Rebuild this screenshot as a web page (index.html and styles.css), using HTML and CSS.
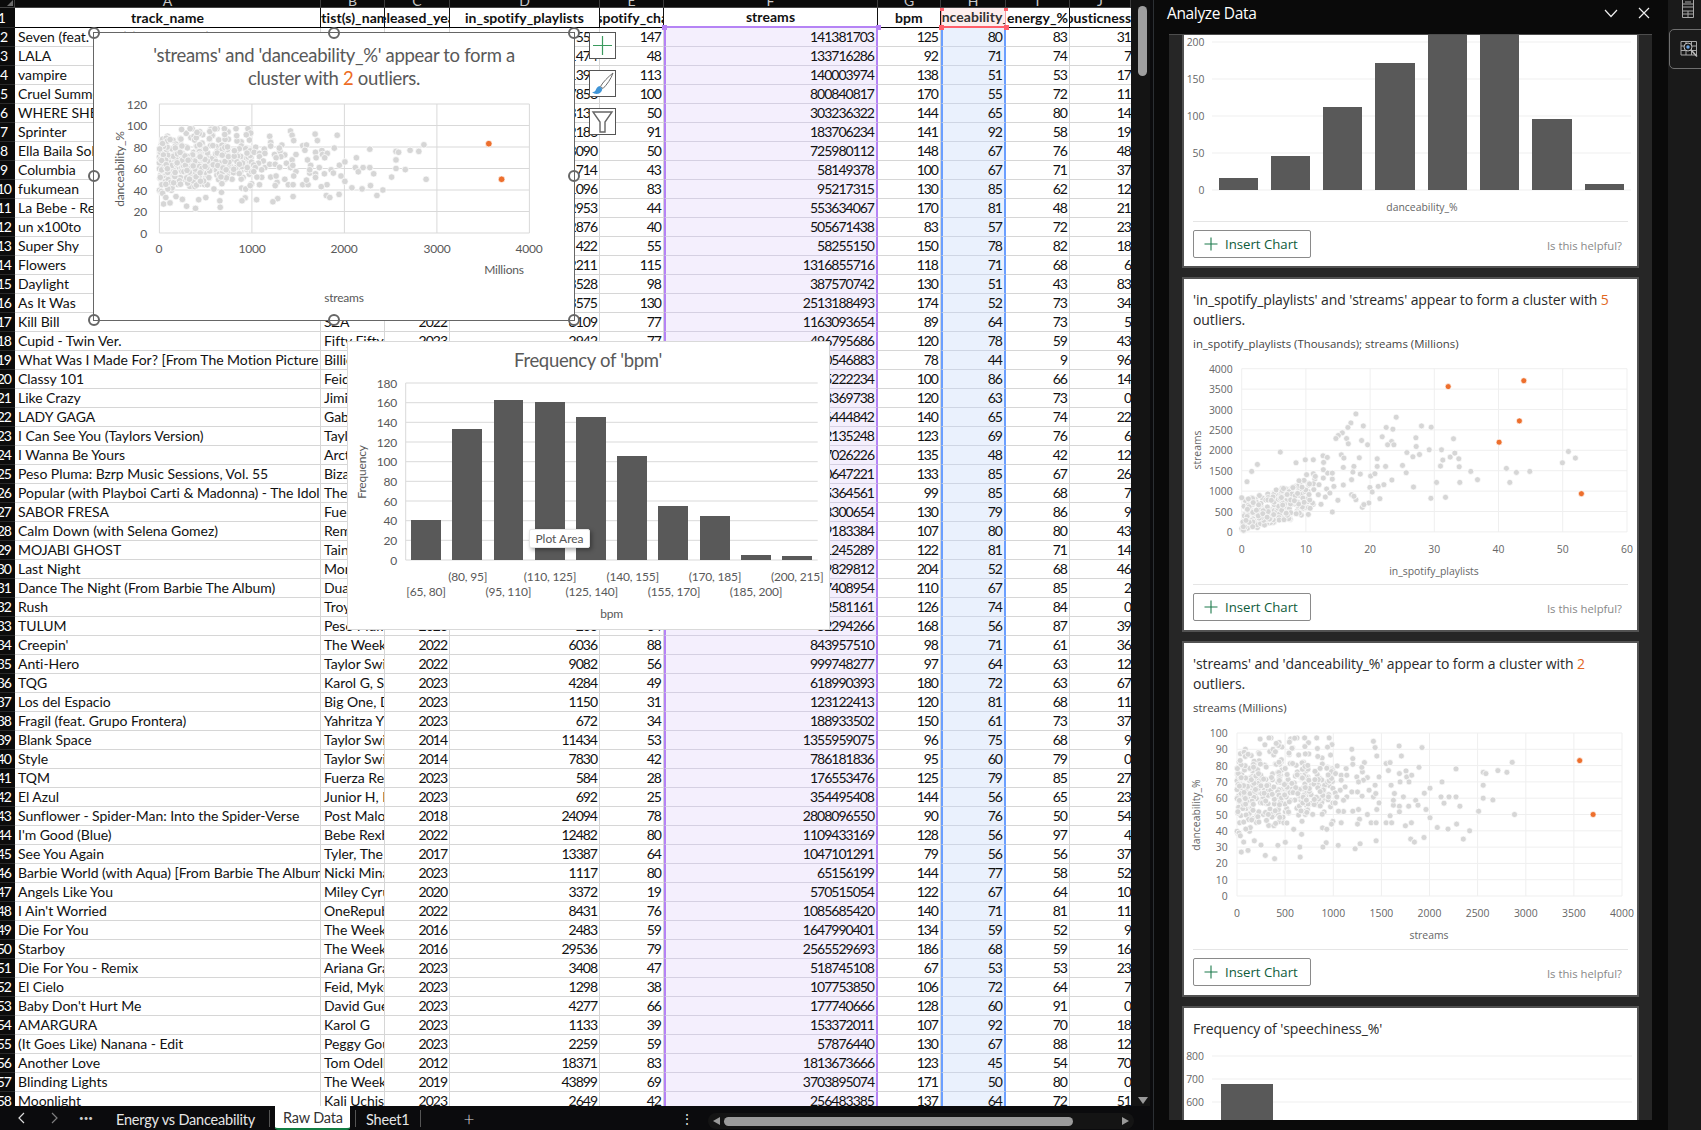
FILE: index.html
```html
<!DOCTYPE html>
<html lang="en">
<head>
<meta charset="utf-8">
<title>Analyze Data</title>
<link rel="stylesheet" href="styles.css">
</head>
<body>
<main class="sheet">
  <div class="grid-area">
    <div class="cells">
      <table class="data">
        <colgroup><col class="c0"><col class="c1"><col class="c2"><col class="c3"><col class="c4"><col class="c5"><col class="c6"><col class="c7"><col class="c8"><col class="c9"><col class="c10"></colgroup>
        <thead>
          <tr class="letters"><th class="corner"></th><th><div class="hc"><span>A</span></div></th><th><div class="hc"><span>B</span></div></th><th><div class="hc"><span>C</span></div></th><th><div class="hc"><span>D</span></div></th><th><div class="hc"><span>E</span></div></th><th><div class="hc"><span>F</span></div></th><th><div class="hc"><span>G</span></div></th><th><div class="hc"><span>H</span></div></th><th><div class="hc"><span>I</span></div></th><th><div class="hc"><span>J</span></div></th></tr>
          <tr class="names"><th class="rn">1</th><th><div class="hc"><span>track_name</span></div></th><th><div class="hc"><span>artist(s)_name</span></div></th><th><div class="hc"><span>released_year</span></div></th><th><div class="hc"><span>in_spotify_playlists</span></div></th><th><div class="hc"><span>in_spotify_charts</span></div></th><th class="sel-f"><div class="hc"><span>streams</span></div></th><th><div class="hc"><span>bpm</span></div></th><th class="sel-h"><div class="hc"><span>danceability_%</span></div></th><th><div class="hc"><span>energy_%</span></div></th><th><div class="hc"><span>acousticness_%</span></div></th></tr>
        </thead>
        <tbody>
<tr><th>2</th><td>Seven (feat. Latto) (Explicit Ver.)</td><td>Latto, Jung Kook</td><td>2023</td><td>553</td><td>147</td><td>141381703</td><td>125</td><td>80</td><td>83</td><td>31</td></tr>
<tr><th>3</th><td>LALA</td><td>Myke Towers</td><td>2023</td><td>1474</td><td>48</td><td>133716286</td><td>92</td><td>71</td><td>74</td><td>7</td></tr>
<tr><th>4</th><td>vampire</td><td>Olivia Rodrigo</td><td>2023</td><td>1397</td><td>113</td><td>140003974</td><td>138</td><td>51</td><td>53</td><td>17</td></tr>
<tr><th>5</th><td>Cruel Summer</td><td>Taylor Swift</td><td>2019</td><td>7858</td><td>100</td><td>800840817</td><td>170</td><td>55</td><td>72</td><td>11</td></tr>
<tr><th>6</th><td>WHERE SHE GOES</td><td>Bad Bunny</td><td>2023</td><td>3133</td><td>50</td><td>303236322</td><td>144</td><td>65</td><td>80</td><td>14</td></tr>
<tr><th>7</th><td>Sprinter</td><td>Dave, Central Cee</td><td>2023</td><td>2186</td><td>91</td><td>183706234</td><td>141</td><td>92</td><td>58</td><td>19</td></tr>
<tr><th>8</th><td>Ella Baila Sola</td><td>Eslabon Armado</td><td>2023</td><td>3090</td><td>50</td><td>725980112</td><td>148</td><td>67</td><td>76</td><td>48</td></tr>
<tr><th>9</th><td>Columbia</td><td>Quevedo</td><td>2023</td><td>714</td><td>43</td><td>58149378</td><td>100</td><td>67</td><td>71</td><td>37</td></tr>
<tr><th>10</th><td>fukumean</td><td>Gunna</td><td>2023</td><td>1096</td><td>83</td><td>95217315</td><td>130</td><td>85</td><td>62</td><td>12</td></tr>
<tr><th>11</th><td>La Bebe - Remix</td><td>Peso Pluma</td><td>2023</td><td>2953</td><td>44</td><td>553634067</td><td>170</td><td>81</td><td>48</td><td>21</td></tr>
<tr><th>12</th><td>un x100to</td><td>Bad Bunny</td><td>2023</td><td>2876</td><td>40</td><td>505671438</td><td>83</td><td>57</td><td>72</td><td>23</td></tr>
<tr><th>13</th><td>Super Shy</td><td>NewJeans</td><td>2023</td><td>422</td><td>55</td><td>58255150</td><td>150</td><td>78</td><td>82</td><td>18</td></tr>
<tr><th>14</th><td>Flowers</td><td>Miley Cyrus</td><td>2023</td><td>12211</td><td>115</td><td>1316855716</td><td>118</td><td>71</td><td>68</td><td>6</td></tr>
<tr><th>15</th><td>Daylight</td><td>David Kushner</td><td>2023</td><td>3528</td><td>98</td><td>387570742</td><td>130</td><td>51</td><td>43</td><td>83</td></tr>
<tr><th>16</th><td>As It Was</td><td>Harry Styles</td><td>2022</td><td>23575</td><td>130</td><td>2513188493</td><td>174</td><td>52</td><td>73</td><td>34</td></tr>
<tr><th>17</th><td>Kill Bill</td><td>SZA</td><td>2022</td><td>8109</td><td>77</td><td>1163093654</td><td>89</td><td>64</td><td>73</td><td>5</td></tr>
<tr><th>18</th><td>Cupid - Twin Ver.</td><td>Fifty Fifty</td><td>2023</td><td>2942</td><td>77</td><td>496795686</td><td>120</td><td>78</td><td>59</td><td>43</td></tr>
<tr><th>19</th><td>What Was I Made For? [From The Motion Picture "Barbie"]</td><td>Billie Eilish</td><td>2023</td><td>711</td><td>98</td><td>30546883</td><td>78</td><td>44</td><td>9</td><td>96</td></tr>
<tr><th>20</th><td>Classy 101</td><td>Feid, Young Miko</td><td>2023</td><td>2610</td><td>40</td><td>335222234</td><td>100</td><td>86</td><td>66</td><td>14</td></tr>
<tr><th>21</th><td>Like Crazy</td><td>Jimin</td><td>2023</td><td>596</td><td>68</td><td>363369738</td><td>120</td><td>63</td><td>73</td><td>0</td></tr>
<tr><th>22</th><td>LADY GAGA</td><td>Gabito Ballesteros</td><td>2023</td><td>332</td><td>26</td><td>86444842</td><td>140</td><td>65</td><td>74</td><td>22</td></tr>
<tr><th>23</th><td>I Can See You (Taylors Version)</td><td>Taylor Swift</td><td>2023</td><td>516</td><td>38</td><td>52135248</td><td>123</td><td>69</td><td>76</td><td>6</td></tr>
<tr><th>24</th><td>I Wanna Be Yours</td><td>Arctic Monkeys</td><td>2013</td><td>12859</td><td>110</td><td>1297026226</td><td>135</td><td>48</td><td>42</td><td>12</td></tr>
<tr><th>25</th><td>Peso Pluma: Bzrp Music Sessions, Vol. 55</td><td>Bizarrap, Peso Pluma</td><td>2023</td><td>1313</td><td>40</td><td>200647221</td><td>133</td><td>85</td><td>67</td><td>26</td></tr>
<tr><th>26</th><td>Popular (with Playboi Carti &amp; Madonna) - The Idol Vol. 1</td><td>The Weeknd</td><td>2023</td><td>1945</td><td>87</td><td>115364561</td><td>99</td><td>85</td><td>68</td><td>7</td></tr>
<tr><th>27</th><td>SABOR FRESA</td><td>Fuerza Regida</td><td>2023</td><td>250</td><td>26</td><td>78300654</td><td>130</td><td>79</td><td>86</td><td>9</td></tr>
<tr><th>28</th><td>Calm Down (with Selena Gomez)</td><td>Rema, Selena Gomez</td><td>2022</td><td>7112</td><td>77</td><td>899183384</td><td>107</td><td>80</td><td>80</td><td>43</td></tr>
<tr><th>29</th><td>MOJABI GHOST</td><td>Tainy, Bad Bunny</td><td>2023</td><td>807</td><td>48</td><td>61245289</td><td>122</td><td>81</td><td>71</td><td>14</td></tr>
<tr><th>30</th><td>Last Night</td><td>Morgan Wallen</td><td>2023</td><td>2420</td><td>19</td><td>429829812</td><td>204</td><td>52</td><td>68</td><td>46</td></tr>
<tr><th>31</th><td>Dance The Night (From Barbie The Album)</td><td>Dua Lipa</td><td>2023</td><td>2988</td><td>101</td><td>127408954</td><td>110</td><td>67</td><td>85</td><td>2</td></tr>
<tr><th>32</th><td>Rush</td><td>Troye Sivan</td><td>2023</td><td>864</td><td>78</td><td>22581161</td><td>126</td><td>74</td><td>84</td><td>0</td></tr>
<tr><th>33</th><td>TULUM</td><td>Peso Pluma</td><td>2023</td><td>266</td><td>34</td><td>52294266</td><td>168</td><td>56</td><td>87</td><td>39</td></tr>
<tr><th>34</th><td>Creepin'</td><td>The Weeknd</td><td>2022</td><td>6036</td><td>88</td><td>843957510</td><td>98</td><td>71</td><td>61</td><td>36</td></tr>
<tr><th>35</th><td>Anti-Hero</td><td>Taylor Swift</td><td>2022</td><td>9082</td><td>56</td><td>999748277</td><td>97</td><td>64</td><td>63</td><td>12</td></tr>
<tr><th>36</th><td>TQG</td><td>Karol G, Shakira</td><td>2023</td><td>4284</td><td>49</td><td>618990393</td><td>180</td><td>72</td><td>63</td><td>67</td></tr>
<tr><th>37</th><td>Los del Espacio</td><td>Big One, Duki</td><td>2023</td><td>1150</td><td>31</td><td>123122413</td><td>120</td><td>81</td><td>68</td><td>11</td></tr>
<tr><th>38</th><td>Fragil (feat. Grupo Frontera)</td><td>Yahritza Y Su Esencia</td><td>2023</td><td>672</td><td>34</td><td>188933502</td><td>150</td><td>61</td><td>73</td><td>37</td></tr>
<tr><th>39</th><td>Blank Space</td><td>Taylor Swift</td><td>2014</td><td>11434</td><td>53</td><td>1355959075</td><td>96</td><td>75</td><td>68</td><td>9</td></tr>
<tr><th>40</th><td>Style</td><td>Taylor Swift</td><td>2014</td><td>7830</td><td>42</td><td>786181836</td><td>95</td><td>60</td><td>79</td><td>0</td></tr>
<tr><th>41</th><td>TQM</td><td>Fuerza Regida</td><td>2023</td><td>584</td><td>28</td><td>176553476</td><td>125</td><td>79</td><td>85</td><td>27</td></tr>
<tr><th>42</th><td>El Azul</td><td>Junior H, Peso Pluma</td><td>2023</td><td>692</td><td>25</td><td>354495408</td><td>144</td><td>56</td><td>65</td><td>23</td></tr>
<tr><th>43</th><td>Sunflower - Spider-Man: Into the Spider-Verse</td><td>Post Malone, Swae Lee</td><td>2018</td><td>24094</td><td>78</td><td>2808096550</td><td>90</td><td>76</td><td>50</td><td>54</td></tr>
<tr><th>44</th><td>I'm Good (Blue)</td><td>Bebe Rexha, David Guetta</td><td>2022</td><td>12482</td><td>80</td><td>1109433169</td><td>128</td><td>56</td><td>97</td><td>4</td></tr>
<tr><th>45</th><td>See You Again</td><td>Tyler, The Creator</td><td>2017</td><td>13387</td><td>64</td><td>1047101291</td><td>79</td><td>56</td><td>56</td><td>37</td></tr>
<tr><th>46</th><td>Barbie World (with Aqua) [From Barbie The Album]</td><td>Nicki Minaj, Aqua</td><td>2023</td><td>1117</td><td>80</td><td>65156199</td><td>144</td><td>77</td><td>58</td><td>52</td></tr>
<tr><th>47</th><td>Angels Like You</td><td>Miley Cyrus</td><td>2020</td><td>3372</td><td>19</td><td>570515054</td><td>122</td><td>67</td><td>64</td><td>10</td></tr>
<tr><th>48</th><td>I Ain't Worried</td><td>OneRepublic</td><td>2022</td><td>8431</td><td>76</td><td>1085685420</td><td>140</td><td>71</td><td>81</td><td>11</td></tr>
<tr><th>49</th><td>Die For You</td><td>The Weeknd</td><td>2016</td><td>2483</td><td>59</td><td>1647990401</td><td>134</td><td>59</td><td>52</td><td>9</td></tr>
<tr><th>50</th><td>Starboy</td><td>The Weeknd</td><td>2016</td><td>29536</td><td>79</td><td>2565529693</td><td>186</td><td>68</td><td>59</td><td>16</td></tr>
<tr><th>51</th><td>Die For You - Remix</td><td>Ariana Grande</td><td>2023</td><td>3408</td><td>47</td><td>518745108</td><td>67</td><td>53</td><td>53</td><td>23</td></tr>
<tr><th>52</th><td>El Cielo</td><td>Feid, Myke Towers</td><td>2023</td><td>1298</td><td>38</td><td>107753850</td><td>106</td><td>72</td><td>64</td><td>7</td></tr>
<tr><th>53</th><td>Baby Don't Hurt Me</td><td>David Guetta</td><td>2023</td><td>4277</td><td>66</td><td>177740666</td><td>128</td><td>60</td><td>91</td><td>0</td></tr>
<tr><th>54</th><td>AMARGURA</td><td>Karol G</td><td>2023</td><td>1133</td><td>39</td><td>153372011</td><td>107</td><td>92</td><td>70</td><td>18</td></tr>
<tr><th>55</th><td>(It Goes Like) Nanana - Edit</td><td>Peggy Gou</td><td>2023</td><td>2259</td><td>59</td><td>57876440</td><td>130</td><td>67</td><td>88</td><td>12</td></tr>
<tr><th>56</th><td>Another Love</td><td>Tom Odell</td><td>2012</td><td>18371</td><td>83</td><td>1813673666</td><td>123</td><td>45</td><td>54</td><td>70</td></tr>
<tr><th>57</th><td>Blinding Lights</td><td>The Weeknd</td><td>2019</td><td>43899</td><td>69</td><td>3703895074</td><td>171</td><td>50</td><td>80</td><td>0</td></tr>
<tr><th>58</th><td>Moonlight</td><td>Kali Uchis</td><td>2023</td><td>2649</td><td>42</td><td>256483385</td><td>137</td><td>64</td><td>72</td><td>51</td></tr>
        </tbody>
      </table>

      <span class="grip grip-f1"></span><span class="grip grip-f2"></span>
      <span class="grip grip-h1"></span><span class="grip grip-h2"></span>
      <span class="grip grip-h3"></span><span class="grip grip-h4"></span>

      <figure class="chart chart-scatter">
        <svg width="480" height="287" viewBox="0 0 480 287">
          <text class="ctitle" x="240" y="21.5">'streams' and 'danceability_%' appear to form a</text>
          <text class="ctitle" x="240" y="44.5">cluster with <tspan class="orange">2</tspan> outliers.</text>
          <path class="xlgrid" d="M65.4 71H435.4M65.4 92.5H435.4M65.4 114H435.4M65.4 135.5H435.4M65.4 157H435.4M65.4 178.5H435.4M65.4 200H435.4M65.4 71V200M157.9 71V200M250.4 71V200M342.9 71V200M435.4 71V200"/>
          <g class="xt end"><text x="53" y="71">120</text><text x="53" y="92.5">100</text><text x="53" y="114">80</text><text x="53" y="135.5">60</text><text x="53" y="157">40</text><text x="53" y="178.5">20</text><text x="53" y="200">0</text></g>
          <g class="xt mid"><text x="65" y="215">0</text><text x="158" y="215">1000</text><text x="250" y="215">2000</text><text x="343" y="215">3000</text><text x="435" y="215">4000</text><text x="410" y="236">Millions</text><text x="250" y="264">streams</text></g>
          <text class="xt mid" transform="translate(25 136) rotate(-90)">danceability_%</text>
          <g id="dots-a" data-x="65.4" data-w="370" data-y="200" data-h="107.5" data-r="3.3"></g>
          <g class="handles"><circle cx="0" cy="0" r="5"/><circle cx="240" cy="0" r="5"/><circle cx="480" cy="0" r="5"/><circle cx="0" cy="143" r="5"/><circle cx="480" cy="143" r="5"/><circle cx="0" cy="287" r="5"/><circle cx="240" cy="287" r="5"/><circle cx="480" cy="287" r="5"/></g>
        </svg>
      </figure>

      <div class="chart-tools">
        <button class="tool" aria-label="Chart elements"><svg width="25" height="25" viewBox="0 0 25 25"><path class="i-plus" d="M12.5 3V22M3 12.5H22"/></svg></button>
        <button class="tool" aria-label="Chart styles"><svg width="25" height="25" viewBox="0 0 25 25"><path class="i-handle" d="M23 2C18 6 13 11 10.5 15.5L13 17.5C17 13.5 21 8 23 2Z"/><path class="i-brush" d="M9.5 15C7 15.5 6.5 17.5 5.5 19.5C5 20.5 3.5 21 2 21C4.5 23.5 9 23.5 11 21C12 19.5 12.5 18.5 12 17.5Z"/></svg></button>
        <button class="tool" aria-label="Chart filters"><svg width="25" height="25" viewBox="0 0 25 25"><path class="i-funnel" d="M3 3H22L15 13V23H10V13Z"/></svg></button>
      </div>

      <figure class="chart chart-bpm">
        <svg width="481" height="287" viewBox="0 0 481 287">
          <text class="ctitle" x="240" y="18">Frequency of 'bpm'</text>
          <path class="xlgrid" d="M57.7 41H469.7M57.7 60.7H469.7M57.7 80.3H469.7M57.7 100H469.7M57.7 119.7H469.7M57.7 139.3H469.7M57.7 159H469.7M57.7 178.7H469.7M57.7 198.3H469.7M57.7 218H469.7M57.7 41V218"/>
          <g class="xt end"><text x="49" y="41">180</text><text x="49" y="60.7">160</text><text x="49" y="80.3">140</text><text x="49" y="100">120</text><text x="49" y="119.7">100</text><text x="49" y="139.3">80</text><text x="49" y="159">60</text><text x="49" y="178.7">40</text><text x="49" y="198.3">20</text><text x="49" y="218">0</text></g>
          <g class="bars"><rect x="63" y="178" width="30" height="40"/><rect x="104" y="87" width="30" height="131"/><rect x="146" y="58" width="29" height="160"/><rect x="187" y="60" width="30" height="158"/><rect x="228" y="75" width="30" height="143"/><rect x="269" y="114" width="30" height="104"/><rect x="310" y="164" width="30" height="54"/><rect x="352" y="174" width="30" height="44"/><rect x="393" y="213" width="30" height="5"/><rect x="434" y="214" width="30" height="4"/></g>
          <g class="xt mid"><text x="119.7" y="234">(80, 95]</text><text x="202" y="234">(110, 125]</text><text x="284.7" y="234">(140, 155]</text><text x="367" y="234">(170, 185]</text><text x="449.3" y="234">(200, 215]</text><text x="78" y="249">[65, 80]</text><text x="160.3" y="249">(95, 110]</text><text x="243.7" y="249">(125, 140]</text><text x="326" y="249">(155, 170]</text><text x="408" y="249">(185, 200]</text><text x="263.7" y="271">bpm</text></g>
          <text class="xt mid" transform="translate(13 130) rotate(-90)">Frequency</text>
        </svg>
        <div class="plot-tip">Plot Area</div>
      </figure>
    </div>
    <div class="vscroll"><span class="vthumb"></span><span class="varrow"></span></div>
  </div>

  <nav class="tabbar">
    <span class="nav-arrow">
      <svg width="10" height="12" viewBox="0 0 10 12"><path class="i-line" d="M7 1L2 6L7 11"/></svg>
    </span>
    <span class="nav-arrow dim">
      <svg width="10" height="12" viewBox="0 0 10 12"><path class="i-line" d="M3 1L8 6L3 11"/></svg>
    </span>
    <span class="more">•••</span>
    <span class="tab first">Energy vs Danceability</span>
    <span class="sep"></span>
    <span class="tab active">Raw Data</span>
    <span class="sep sep-after"></span>
    <span class="tab third">Sheet1</span>
    <span class="sep"></span>
    <span class="add">+</span>
    <span class="kebab">⋮</span>
    <div class="hscroll"><span class="harrow left"></span><span class="hthumb"></span><span class="harrow right"></span></div>
  </nav>
</main>

<aside class="panel">
  <header class="panel-head">
    <h1>Analyze Data</h1>
    <svg class="head-ico" width="14" height="9" viewBox="0 0 14 9"><path class="i-white" d="M1 1L7 7.5L13 1"/></svg>
    <svg class="head-ico" width="12" height="12" viewBox="0 0 12 12"><path class="i-white" d="M1 1L11 11M11 1L1 11"/></svg>
  </header>
  <div class="scroller">
    <article class="card card-clipped">
      <svg class="plot" width="453" height="186" viewBox="0 0 453 186">
        <path class="lgrid" d="M28 7H447M28 44H447M28 81H447M28 118H447M28 155H447"/>
        <g class="at end"><text x="20.5" y="7">200</text><text x="20.5" y="44">150</text><text x="20.5" y="81">100</text><text x="20.5" y="118">50</text><text x="20.5" y="155">0</text></g>
        <g class="bars"><rect x="35" y="143" width="39" height="12"/><rect x="87" y="121" width="39" height="34"/><rect x="139" y="72" width="39" height="83"/><rect x="191" y="28" width="40" height="127"/><rect x="244" y="0" width="39" height="155"/><rect x="296" y="0" width="39" height="155"/><rect x="348" y="84" width="40" height="71"/><rect x="401" y="149" width="39" height="6"/></g>
        <text class="at mid" x="238" y="172">danceability_%</text>
      </svg>
      <footer class="card-foot">
        <button class="insert"><svg width="14" height="14" viewBox="0 0 14 14"><path class="i-green" d="M7 0.5V13.5M0.5 7H13.5"/></svg>Insert Chart</button>
        <span class="helpful">Is this helpful?</span>
      </footer>
    </article>

    <article class="card">
      <h2>'in_spotify_playlists' and 'streams' appear to form a cluster with <span class="orange">5</span> outliers.</h2>
      <p class="sub">in_spotify_playlists (Thousands); streams (Millions)</p>
      <svg class="plot" width="453" height="226" viewBox="0 0 453 226">
        <path class="lgrid" d="M57.7 14.7H443M57.7 35.1H443M57.7 55.5H443M57.7 75.9H443M57.7 96.3H443M57.7 116.7H443M57.7 137.1H443M57.7 157.5H443M57.7 177.9H443M57.7 14.7V178M121.9 14.7V178M186.1 14.7V178M250.3 14.7V178M314.5 14.7V178M378.7 14.7V178M443 14.7V178"/>
        <g class="at end"><text x="48.7" y="14.7">4000</text><text x="48.7" y="35.1">3500</text><text x="48.7" y="55.5">3000</text><text x="48.7" y="75.9">2500</text><text x="48.7" y="96.3">2000</text><text x="48.7" y="116.7">1500</text><text x="48.7" y="137.1">1000</text><text x="48.7" y="157.5">500</text><text x="48.7" y="177.9">0</text></g>
        <g class="at mid"><text x="57.7" y="195">0</text><text x="121.9" y="195">10</text><text x="186.1" y="195">20</text><text x="250.3" y="195">30</text><text x="314.5" y="195">40</text><text x="378.7" y="195">50</text><text x="443" y="195">60</text><text x="250" y="217">in_spotify_playlists</text></g>
        <text class="at mid" transform="translate(13 96) rotate(-90)">streams</text>
        <g id="dots-b" data-x="57.7" data-w="385.3" data-y="177.9" data-h="163.2" data-r="3"></g>
      </svg>
      <footer class="card-foot ruled">
        <button class="insert"><svg width="14" height="14" viewBox="0 0 14 14"><path class="i-green" d="M7 0.5V13.5M0.5 7H13.5"/></svg>Insert Chart</button>
        <span class="helpful">Is this helpful?</span>
      </footer>
    </article>

    <article class="card">
      <h2>'streams' and 'danceability_%' appear to form a cluster with <span class="orange">2</span> outliers.</h2>
      <p class="sub">streams (Millions)</p>
      <svg class="plot" width="453" height="227" viewBox="0 0 453 227">
        <path class="lgrid" d="M53 15H438M53 31.3H438M53 47.6H438M53 63.9H438M53 80.2H438M53 96.5H438M53 112.8H438M53 129.1H438M53 145.4H438M53 161.7H438M53 178H438M53 15V178M101.1 15V178M149.3 15V178M197.4 15V178M245.5 15V178M293.6 15V178M341.8 15V178M389.9 15V178M438 15V178"/>
        <g class="at end"><text x="43.7" y="15">100</text><text x="43.7" y="31.3">90</text><text x="43.7" y="47.6">80</text><text x="43.7" y="63.9">70</text><text x="43.7" y="80.2">60</text><text x="43.7" y="96.5">50</text><text x="43.7" y="112.8">40</text><text x="43.7" y="129.1">30</text><text x="43.7" y="145.4">20</text><text x="43.7" y="161.7">10</text><text x="43.7" y="178">0</text></g>
        <g class="at mid"><text x="53" y="195">0</text><text x="101.1" y="195">500</text><text x="149.3" y="195">1000</text><text x="197.4" y="195">1500</text><text x="245.5" y="195">2000</text><text x="293.6" y="195">2500</text><text x="341.8" y="195">3000</text><text x="389.9" y="195">3500</text><text x="438" y="195">4000</text><text x="245" y="217">streams</text></g>
        <text class="at mid" transform="translate(12 97) rotate(-90)">danceability_%</text>
        <g id="dots-c" data-x="53" data-w="385" data-y="178" data-h="163" data-r="3"></g>
      </svg>
      <footer class="card-foot ruled">
        <button class="insert"><svg width="14" height="14" viewBox="0 0 14 14"><path class="i-green" d="M7 0.5V13.5M0.5 7H13.5"/></svg>Insert Chart</button>
        <span class="helpful">Is this helpful?</span>
      </footer>
    </article>

    <article class="card">
      <h2>Frequency of 'speechiness_%'</h2>
      <svg class="plot" width="453" height="130" viewBox="0 0 453 130">
        <path class="lgrid" d="M28 17H448M28 40H448M28 63H448"/>
        <g class="at end"><text x="20" y="17">800</text><text x="20" y="40">700</text><text x="20" y="63">600</text></g>
        <g class="bars"><rect x="37" y="45" width="52" height="85"/></g>
      </svg>
    </article>
  </div>
</aside>

<aside class="rail">
  <svg class="rail-top" width="14" height="18" viewBox="0 0 14 18"><path class="i-rail" d="M1.5 0V17.5H12.5V0M1.5 4H12.5M1.5 7H12.5M1.5 11H12.5M1.5 14H12.5M7 11V17.5M4 2H10"/></svg>
  <div class="rail-btn">
    <svg width="18" height="18" viewBox="0 0 18 18"><path class="i-rail" d="M1 1.5H16.5V15H1ZM1 6H16.5M1 10.5H16.5M6 1.5V15M11.5 1.5V15"/><circle class="i-lens" cx="8" cy="7" r="4"/><path class="i-lens-h" d="M11 10L17 16.5"/><circle class="i-dot" cx="8" cy="7" r="1.7"/></svg>
  </div>
</aside>
<script src="script.js"></script>
</body>
</html>
```
FILE: styles.css
```css
* { box-sizing: border-box; }
html, body { margin: 0; height: 100%; }
body { display: flex; width: 1701px; height: 1130px; overflow: hidden; background: #0a0a0a; font-family: "Open Sans", "Noto Sans", sans-serif; }
svg { display: block; }
button { font: inherit; padding: 0; cursor: default; }

/* spreadsheet */
.sheet { width: 1153px; height: 1130px; flex: none; display: flex; flex-direction: column; background: #0b0b0d; }
.grid-area { height: 1106px; display: flex; }
.cells { position: relative; width: 1131px; height: 1106px; overflow: hidden; background: #fff; }
.data { border-collapse: separate; border-spacing: 0; table-layout: fixed; width: 1131px; font: 14px Lato, "Liberation Sans", sans-serif; color: #111; letter-spacing: -0.03px; }
.c0 { width: 15px; } .c1 { width: 306px; } .c2 { width: 64px; } .c3 { width: 65px; } .c4 { width: 150px; } .c5 { width: 64px; }
.c6 { width: 214px; } .c7 { width: 63px; } .c8 { width: 65px; } .c9 { width: 64px; } .c10 { width: 61px; }
.data tr { height: 19px; }
.data td { height: 19px; line-height: 18px; padding: 0 3px; white-space: nowrap; overflow: hidden; border-bottom: 1px solid #d6d6d6; border-right: 1px solid #d6d6d6; }
.data td:nth-child(n+4) { text-align: right; letter-spacing: -1px; padding-right: 2px; }
.data tbody th { height: 19px; padding: 0 4px 0 0; background: #0b0b0b; color: #fff; font-weight: 400; line-height: 18px; white-space: nowrap; overflow: hidden; direction: rtl; text-align: left; letter-spacing: -1px; border-bottom: 1px solid #2a2a2a; }
.data td:nth-child(7) { background: #f4effd; border-left: 2px solid #b583f5; border-right: 2px solid #b583f5; border-bottom-color: #d5d0e2; }
.data td:nth-child(9) { background: #eaf1fd; border-left: 2px solid #6b9fff; border-right: 2px solid #6b9fff; border-bottom-color: #cfd6e4; }
.data td:last-child { border-right: 0; padding-right: 0; }
.letters { background: #0b0b0b; }
.data tr.letters { height: 8px; }
.letters th { height: 8px; padding: 0; overflow: hidden; color: #c8c8c8; font-weight: 400; border-right: 1px solid #3d3d3d; border-bottom: 1px solid #444; }
.letters .hc { height: 7px; align-items: flex-end; }
.letters .hc span { line-height: 13px; }
.letters .corner { position: relative; }
.letters .corner::before { content: ""; position: absolute; right: 1px; bottom: 1px; border-style: solid; border-width: 0 0 6px 6px; border-color: transparent transparent #6d6d6d transparent; }
.names th { height: 19px; padding: 0; background: #fff; font-weight: 700; border-right: 1px solid #111; border-bottom: 1.5px solid #000; overflow: hidden; letter-spacing: 0.05px; }
.names th:last-child { border-right: 0; }
.names .rn { background: #0b0b0b; color: #fff; font-weight: 400; direction: rtl; text-align: left; padding-right: 9px; border-right: 0; border-bottom: 1px solid #2a2a2a; }
.hc { display: flex; justify-content: center; overflow: hidden; height: 18px; line-height: 18px; white-space: nowrap; }
.hc span { flex: none; }
.names .sel-f { border-bottom: 2px solid #b583f5; border-right-color: #111; }
.names .sel-h { background: #fdeeee; border-bottom: 2px solid #ff5f6a; border-left: 1px solid #f5a0a5; border-right: 1px solid #f5a0a5; color: #333; }
.grip { position: absolute; width: 5px; height: 5px; }
.grip-f1 { left: 662px; top: 25px; background: #b583f5; }
.grip-f2 { left: 876px; top: 25px; background: #b583f5; }
.grip-h1 { left: 939px; top: 25px; background: #ff5f6a; }
.grip-h2 { left: 1004px; top: 25px; background: #ff5f6a; }
.grip-h3 { left: 940px; top: 8px; width: 4px; height: 3px; background: #ff5f6a; }
.grip-h4 { left: 1004px; top: 8px; width: 4px; height: 3px; background: #ff5f6a; }

/* floating Excel charts */
.chart { position: absolute; margin: 0; background: #fff; }
.chart svg { overflow: visible; }
.chart-scatter { left: 94px; top: 33px; width: 480px; height: 287px; outline: 1.5px solid #666; }
.chart-bpm { left: 348px; top: 342px; width: 481px; height: 287px; outline: 1px solid #d9d9d9; }
.ctitle { font: 18.5px Lato, sans-serif; fill: #595959; text-anchor: middle; dominant-baseline: central; letter-spacing: -0.32px; }
.xt text, text.xt { font: 12px Lato, sans-serif; fill: #595959; dominant-baseline: central; letter-spacing: -0.2px; }
.end { text-anchor: end; }
.mid { text-anchor: middle; }
.xlgrid { stroke: #d9d9d9; stroke-width: 1; fill: none; }
.bars { fill: #595959; }
.orange { color: #e2661e; fill: #ed6c24; }
.handles circle { fill: #fff; stroke: #666; stroke-width: 2; }
.dot { fill: #d6d6d6; stroke: #fff; stroke-width: .7; }
.dot.out { fill: #ed6f2d; }
.plot-tip { position: absolute; left: 181px; top: 187px; width: 61px; height: 19px; line-height: 18px; text-align: center; background: #fff; border: 1px solid #e6e6e6; border-radius: 2px; box-shadow: 2px 2px 4px rgba(0,0,0,.35); font: 12px/18px Lato, sans-serif; color: #555; }
.chart-tools { position: absolute; left: 589px; top: 32px; display: flex; flex-direction: column; gap: 11px; }
.tool { width: 27px; height: 27px; background: #fff; border: 1px solid #555; display: block; }
.i-plus { stroke: #3b9a5e; fill: none; stroke-width: 1.2; }
.i-handle { fill: #fff; stroke: #6a6a6a; stroke-width: 1; }
.i-brush { fill: #3f94d6; }
.i-funnel { fill: #fff; stroke: #666; stroke-width: 1.4; }

/* vertical scrollbar */
.vscroll { width: 19px; height: 1106px; background: #141414; position: relative; }
.vthumb { position: absolute; left: 7px; top: 6px; width: 9px; height: 70px; border-radius: 5px; background: #a0a0a0; }
.varrow { position: absolute; left: 7px; top: 1097px; border-style: solid; border-width: 7px 5px 0; border-color: #9a9a9a transparent transparent; }

/* sheet tabs */
.tabbar { height: 24px; display: flex; align-items: center; color: #e6e6e6; font: 14.5px Lato, sans-serif; letter-spacing: -0.2px; }
.nav-arrow { width: 32px; padding-left: 17px; flex: none; }
.nav-arrow.dim { opacity: .55; }
.i-line { fill: none; stroke: #ddd; stroke-width: 1.2; }
.more { width: 37px; flex: none; font-size: 8px; letter-spacing: 0; color: #ccc; margin-left: 15px; }
.tab { flex: none; }
.tab.first { width: 153px; padding-top: 2px; }
.sep { width: 1px; height: 17px; flex: none; background: #555; }
.sep-after { margin-left: 5px; }
.tab.active { width: 75px; height: 24px; background: #fff; color: #333; padding: 3px 0 0 8px; line-height: 18px; margin-left: 5px; border-bottom: 2px solid #107c41; border-radius: 0 0 3px 3px; white-space: nowrap; }
.tab.third { width: 64px; padding-left: 10px; padding-top: 2px; }
.add { width: 96px; flex: none; text-align: center; font-size: 19px; color: #ddd; font-weight: 300; }
.kebab { width: 177px; flex: none; text-align: right; font-size: 14px; color: #ddd; }
.hscroll { position: relative; margin-left: 14px; width: 426px; height: 16px; background: #141414; border-radius: 8px; margin-top: 6px; }
.hthumb { position: absolute; left: 16px; top: 4px; width: 349px; height: 9px; border-radius: 5px; background: #9b9b9b; }
.harrow { position: absolute; top: 4px; border-style: solid; border-width: 4.5px 0; border-color: transparent; }
.harrow.left { left: 5px; border-right: 7px solid #999; }
.harrow.right { right: 5px; border-left: 7px solid #999; }

/* Analyze Data pane */
.panel { width: 515px; flex: none; height: 1130px; border-left: 1px solid #2c3034; background: #0a0a0a; display: flex; flex-direction: column; }
.panel-head { height: 34px; flex: none; display: flex; align-items: center; padding: 0 18px 8px 13px; color: #fff; }
.panel-head h1 { margin: 0 auto 0 0; font-size: 15.5px; font-weight: 400; letter-spacing: -0.35px; }
.head-ico { overflow: visible; margin-left: 20px; }
.i-white { fill: none; stroke: #eee; stroke-width: 1.2; }
.scroller { margin-left: 15px; width: 483px; height: 1086px; flex: none; padding: 0 13px; background: #262626; border-top: 1px solid #4d4d4d; overflow: hidden; }
.card { background: #fff; border: 2px solid #525252; padding: 11px 0 0 9px; margin-bottom: 9px; color: #222; width: 457px; }
.card-clipped { border-top: 0; padding-top: 0; height: 233px; }
.card h2 { margin: 0; padding-right: 18px; font-size: 14px; line-height: 20px; font-weight: 400; letter-spacing: -0.1px; color: #2a2a2a; }
.sub { margin: 4px 0 0; font-size: 11.4px; line-height: 20px; color: #444; }
.plot { margin-left: -9px; overflow: visible; }
.lgrid { stroke: #efefef; stroke-width: 1; fill: none; }
.at text, text.at { font-size: 10.4px; fill: #666; dominant-baseline: central; }
.card-foot { display: flex; justify-content: space-between; align-items: flex-end; width: 435px; height: 46px; padding: 8px 6px 9px 0; border-top: 1px solid #e5e5e5; }
.card-foot.ruled { margin-top: 4px; }
.insert { display: flex; align-items: center; gap: 7px; width: 118px; height: 28px; padding-left: 10px; background: #fff; border: 1px solid #8a8a8a; border-radius: 2px; color: #0e5c3b; font-size: 13.2px; font-weight: 500; }
.i-green { stroke: #1d7a4c; fill: none; stroke-width: 1.1; }
.helpful { font-size: 11.3px; color: #888; margin-bottom: 5px; }

/* right rail */
.rail { flex: 1; height: 1130px; background: #1a1a1a; position: relative; }
.rail-top { margin: 0 0 0 13px; }
.rail-btn { position: absolute; left: 1px; top: 29px; width: 40px; height: 40px; border: 1px solid #6f6f6f; border-radius: 5px; padding: 10px 0 0 10px; }
.i-rail { fill: none; stroke: #a8a8a8; stroke-width: 1; }
.i-lens { fill: #1a1a1a; stroke: #bdbdbd; stroke-width: 1; }
.i-lens-h { stroke: #bdbdbd; stroke-width: 1.5; }
.i-dot { fill: #6aa5e8; }
```
FILE: script.js
```js
// Scatter points of the three cluster charts, as zoom-sheet coordinates plus a seeded dense cloud.
(function () {
  function rng(seed) {
    return function () {
      seed = (seed + 0x6D2B79F5) | 0;
      var t = Math.imul(seed ^ (seed >>> 15), 1 | seed);
      t = (t + Math.imul(t ^ (t >>> 7), 61 | t)) ^ t;
      return ((t ^ (t >>> 14)) >>> 0) / 4294967296;
    };
  }
  function frac(list, x0, xw, y0, yh) {
    var out = [];
    for (var i = 0; i < list.length; i += 2) {
      out.push([(list[i] - x0) / xw, (y0 - list[i + 1]) / yh]);
    }
    return out;
  }
  var danceSparse = [610,303,615,322,620,347,687,317,694,347,756,322,747,381,648,370,660,367,655,391,688,400,708,392,710,410,725,405,690,425,717,425,663,435,615,435,627,410,592,412,577,395,583,367,575,381,545,327,548,355,548,372,528,385,501,377,474,404,496,400,513,405,530,405,513,420,560,410,580,420,565,425,525,440,510,450,495,458,475,470,500,470,530,470,545,455,562,455,576,468,597,450,610,470,617,460,627,488,620,508,592,523,568,537,562,552,603,548,618,548,648,548,665,548,660,527,670,495,673,460,700,470,670,480,688,498,688,515,716,498,737,480,744,495,768,508,780,533,763,459,780,444,816,425,813,470,837,470,858,470,822,489,870,498,926,513,940,474,969,479,940,435,940,396,948,400,984,391,1011,396,1027,366,858,386,1034,523,899,572,880,597,860,552,834,567,802,562,762,592,722,597,733,606,724,548,706,557,618,602,570,611,555,626,504,616,513,548,484,552,520,514,505,513,548,513,565,508,495,488,520,480,213,636,233,631,285,646,313,656,390,651,323,616,210,587,220,606,252,602,272,615];
  var danceOut = [1230,361,1270,523];
  var flowSparse = [331,547,378,579,406,570,430,570,459,558,472,563,461,578,262,584,245,605,231,636,215,684,558,432,543,459,534,473,580,468,517,489,505,497,498,506,530,506,535,522,575,512,593,525,514,555,522,565,568,564,552,590,520,593,549,607,571,613,545,630,520,646,602,619,615,612,622,567,622,590,647,590,666,631,600,653,625,650,642,645,607,667,630,687,504,692,597,700,577,713,582,705,558,690,545,675,552,680,487,727,679,442,649,473,669,478,637,501,665,515,653,525,672,525,738,504,739,530,755,468,784,472,711,548,729,561,749,554,778,540,815,540,841,562,855,550,851,507,867,567,819,571,812,589,698,587,709,609,868,591,903,605,923,630,870,638,800,638,731,652,783,686,827,683,1010,596,1040,608,1080,605,1020,638,1178,579,1196,545,1217,565,460,625,487,628,473,610,487,610,460,600,430,612,410,615,436,620,492,650,470,658,447,645,445,675,466,682,480,670,453,704];
  var flowOut = [835,350,1062,332,1049,453,988,517,1235,672];

  var r1 = rng(7), dense = [], i;
  for (i = 0; i < 400; i++) {
    var g = (r1() + r1() + r1() + r1() - 2) * 1.73;
    var yv = Math.min(97, Math.max(30, 67 + g * 14));
    dense.push([Math.pow(r1(), 1.3) * 0.25, yv / 100]);
  }
  var dance = dense.concat(frac(danceSparse, 200, 1157, 768, 490));
  var danceO = frac(danceOut, 200, 1157, 768, 490);

  var r2 = rng(21), cloud = [];
  for (i = 0; i < 240; i++) {
    var x = Math.pow(r2(), 1.1) * 11.5;
    var lo = x * 40, hi = 750 + x * 60;
    cloud.push([x / 60, (lo + Math.pow(r2(), 1.05) * (hi - lo)) / 4000]);
  }
  var flow = cloud.concat(frac(flowSparse, 215, 1157, 787, 491));
  var flowO = frac(flowOut, 215, 1157, 787, 491);

  function draw(id, pts, outs) {
    var g = document.getElementById(id);
    var d = g.dataset, NS = "http://www.w3.org/2000/svg";
    function add(p, cls) {
      var c = document.createElementNS(NS, "circle");
      c.setAttribute("cx", (+d.x + p[0] * d.w).toFixed(1));
      c.setAttribute("cy", (+d.y - p[1] * d.h).toFixed(1));
      c.setAttribute("r", d.r);
      c.setAttribute("class", cls);
      g.appendChild(c);
    }
    pts.forEach(function (p) { add(p, "dot"); });
    outs.forEach(function (p) { add(p, "dot out"); });
  }
  draw("dots-a", dance, danceO);
  draw("dots-b", flow, flowO);
  draw("dots-c", dance, danceO);
})();
```
